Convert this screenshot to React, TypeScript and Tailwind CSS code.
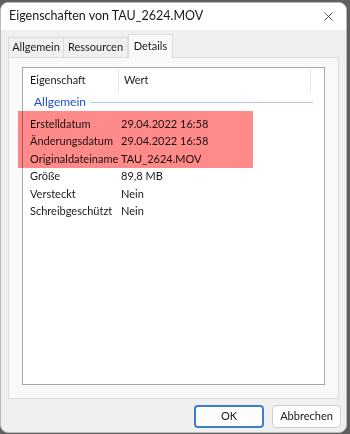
import { X } from "lucide-react";

const rows = [
  { k: "Erstelldatum", v: "29.04.2022 16:58" },
  { k: "Änderungsdatum", v: "29.04.2022 16:58" },
  { k: "Originaldateiname", v: "TAU_2624.MOV" },
  { k: "Größe", v: "89,8 MB" },
  { k: "Versteckt", v: "Nein" },
  { k: "Schreibgeschützt", v: "Nein" },
];

export default function App() {
  return (
    <div
      className="h-[434px] w-[350px] bg-[#5f5f5f] pt-[2px] pr-[3px] text-[11px] text-[#1a1a1a]"
      style={{ fontFamily: 'Lato, "Liberation Sans", sans-serif' }}
    >
      <div className="relative flex h-[431px] flex-col overflow-hidden rounded-[8px] border border-[#b9b9b9] bg-[#f0f0f0]">
        {/* title bar */}
        <div className="flex h-[27px] shrink-0 items-center justify-between bg-white pl-[8px] pr-[10px]">
          <span className="text-[12.5px] leading-none">Eigenschaften von TAU_2624.MOV</span>
          <X size={15} strokeWidth={1.2} className="text-[#222]" />
        </div>

        {/* tabs */}
        <div className="flex h-[27px] items-end px-[7px] pt-[4px]">
          <div className="flex h-[20px] w-[56px] items-center justify-center border border-b-0 border-[#dcdcdc] bg-[#f0f0f0]">Allgemein</div>
          <div className="flex h-[20px] w-[64px] items-center justify-center border border-b-0 border-l-0 border-[#dcdcdc] bg-[#f0f0f0]">Ressourcen</div>
          <div className="relative -mb-px flex h-[24px] w-[45px] items-center justify-center border border-b-0 border-[#dcdcdc] bg-[#f9f9f9]">Details</div>
        </div>

        {/* tab panel */}
        <div className="mx-[7px] flex h-[342px] flex-col border border-[#dcdcdc] bg-[#f9f9f9] px-[13px] pt-[9px] pb-[13px]">
          <div className="flex flex-1 flex-col border border-[#a4a8ae] bg-white">
            <div className="flex h-[24px] items-center">
              <div className="flex h-full w-[96px] items-center border-r border-[#e6e6e6] pl-[7px]">Eigenschaft</div>
              <div className="flex h-full w-[192px] items-center border-r border-[#e6e6e6] pl-[5px]">Wert</div>
            </div>
            <div className="flex h-[20px] items-center pl-[11px] pr-[11px]">
              <span className="text-[12px] text-[#1f4fcc]">Allgemein</span>
              <div className="ml-[4px] h-px flex-1 bg-[#b7c3e6]" />
            </div>
            <div className="flex flex-col pt-[3px]">
              {rows.map((r) => (
                <div key={r.k} className="flex h-[17.5px] items-center pl-[7px]">
                  <span className="w-[91px]">{r.k}</span>
                  <span>{r.v}</span>
                </div>
              ))}
            </div>
          </div>
        </div>

        {/* buttons */}
        <div className="flex flex-1 items-center justify-end gap-[8px] pr-[5px] pt-[1px]">
          <button className="h-[23px] w-[70px] rounded-[4px] border-2 border-[#3c7fc8] bg-[#fdfdfd]">OK</button>
          <button className="h-[23px] w-[69px] rounded-[4px] border border-[#d0d0d0] bg-[#fdfdfd]">Abbrechen</button>
        </div>

        {/* red annotation */}
        <div className="absolute left-[17px] top-[108px] h-[57px] w-[235px] bg-[#ff8a8a] mix-blend-multiply" />
      </div>
    </div>
  );
}
